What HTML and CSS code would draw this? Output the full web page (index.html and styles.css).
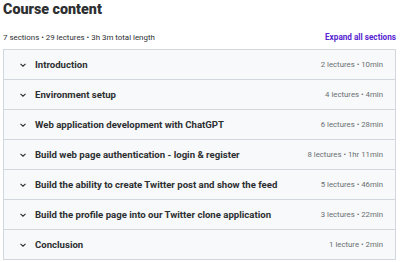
FILE: index.html
```html
<!DOCTYPE html>
<html lang="en">
  <head>
    <meta charset="UTF-8" />
    <title>Course content</title>
    <link rel="stylesheet" href="styles.css">
  </head>
  <body>
    <div class="course-content">
      <h2 class="title">Course content</h2>
      <div class="summary">
        <span class="stats">7 sections • 29 lectures • 3h 3m total length</span>
        <button class="expand">Expand all sections</button>
      </div>
      <div class="sections">
        <div class="section">
          <span class="chevron"><svg viewBox="0 0 10 10"><path d="M2.5 3.8 5 6.2 7.5 3.8" /></svg></span>
          <span class="name">Introduction</span>
          <span class="info">2 lectures • 10min</span>
        </div>
        <div class="section">
          <span class="chevron"><svg viewBox="0 0 10 10"><path d="M2.5 3.8 5 6.2 7.5 3.8" /></svg></span>
          <span class="name">Environment setup</span>
          <span class="info">4 lectures • 4min</span>
        </div>
        <div class="section">
          <span class="chevron"><svg viewBox="0 0 10 10"><path d="M2.5 3.8 5 6.2 7.5 3.8" /></svg></span>
          <span class="name">Web application development with ChatGPT</span>
          <span class="info">6 lectures • 28min</span>
        </div>
        <div class="section">
          <span class="chevron"><svg viewBox="0 0 10 10"><path d="M2.5 3.8 5 6.2 7.5 3.8" /></svg></span>
          <span class="name">Build web page authentication - login &amp; register</span>
          <span class="info">8 lectures • 1hr 11min</span>
        </div>
        <div class="section">
          <span class="chevron"><svg viewBox="0 0 10 10"><path d="M2.5 3.8 5 6.2 7.5 3.8" /></svg></span>
          <span class="name">Build the ability to create Twitter post and show the feed</span>
          <span class="info">5 lectures • 46min</span>
        </div>
        <div class="section">
          <span class="chevron"><svg viewBox="0 0 10 10"><path d="M2.5 3.8 5 6.2 7.5 3.8" /></svg></span>
          <span class="name">Build the profile page into our Twitter clone application</span>
          <span class="info">3 lectures • 22min</span>
        </div>
        <div class="section">
          <span class="chevron"><svg viewBox="0 0 10 10"><path d="M2.5 3.8 5 6.2 7.5 3.8" /></svg></span>
          <span class="name">Conclusion</span>
          <span class="info">1 lecture • 2min</span>
        </div>
      </div>
    </div>
  </body>
</html>
```

FILE: styles.css
```css
* {
  margin: 0;
  padding: 0;
  box-sizing: border-box;
}
body {
  background: #fff;
  color: #2d2f31;
  font-family: Roboto, "Liberation Sans", sans-serif;
}

.course-content {
  padding: 0 4px 0 3px;
}

.title {
  font-size: 14.3px;
  font-weight: 900;
  line-height: 18px;
}

.summary {
  display: flex;
  justify-content: space-between;
  align-items: center;
  margin-top: 12px;
  height: 14px;
}
.stats {
  font-size: 7.9px;
  color: #2d2f31;
}
.expand {
  background: none;
  border: none;
  font-family: inherit;
  font-size: 8.2px;
  font-weight: 700;
  color: #5624d0;
  cursor: pointer;
}

.sections {
  margin-top: 5px;
  border: 1px solid #d1d7dc;
  border-bottom: none;
}
.section {
  display: flex;
  align-items: center;
  height: 30px;
  padding: 0 12px 0 14px;
  background: #f7f9fa;
  border-bottom: 1px solid #d1d7dc;
}
.chevron {
  width: 10px;
  height: 10px;
  margin-right: 7px;
  display: flex;
}
.chevron svg {
  width: 10px;
  height: 10px;
  fill: none;
  stroke: #2d2f31;
  stroke-width: 1.1;
}
.name {
  flex: 1;
  font-size: 9.6px;
  font-weight: 700;
}
.info {
  font-size: 7.8px;
  color: #6a6f73;
}
```
